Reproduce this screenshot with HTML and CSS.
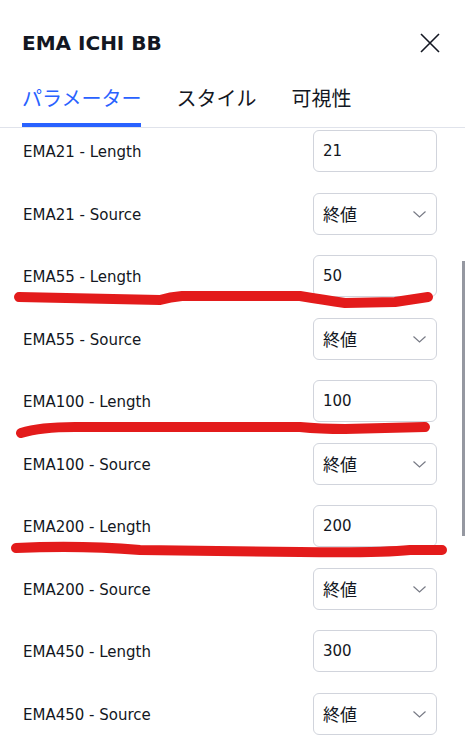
FILE: index.html
```html
<!DOCTYPE html>
<html lang="ja">
  <head>
    <meta charset="UTF-8" />
    <meta name="viewport" content="width=device-width, initial-scale=1.0" />
    <title>EMA ICHI BB</title>
    <link rel="stylesheet" href="styles.css">
  </head>
  <body>
    <div class="dialog">
      <div class="dialog-header">
        <h1 class="dialog-title">EMA ICHI BB</h1>
        <button type="button" class="close-btn" aria-label="閉じる">
          <svg width="20" height="20" viewBox="0 0 20 20">
            <path d="M1 1 L19 19 M19 1 L1 19" stroke="#131722" stroke-width="1.6" fill="none" />
          </svg>
        </button>
      </div>

      <div class="tabs">
        <span class="tab active">パラメーター</span>
        <span class="tab">スタイル</span>
        <span class="tab">可視性</span>
      </div>

      <div class="content">
        <div class="rows">
          <div class="row">
            <span class="row-label">EMA21 - Length</span>
            <div class="field">21</div>
          </div>
          <div class="row">
            <span class="row-label">EMA21 - Source</span>
            <div class="field select">終値<svg class="chevron" width="13" height="7" viewBox="0 0 13 7"><path d="M0.5 0.5 L6.5 6 L12.5 0.5" /></svg></div>
          </div>
          <div class="row">
            <span class="row-label">EMA55 - Length</span>
            <div class="field">50</div>
          </div>
          <div class="row">
            <span class="row-label">EMA55 - Source</span>
            <div class="field select">終値<svg class="chevron" width="13" height="7" viewBox="0 0 13 7"><path d="M0.5 0.5 L6.5 6 L12.5 0.5" /></svg></div>
          </div>
          <div class="row">
            <span class="row-label">EMA100 - Length</span>
            <div class="field">100</div>
          </div>
          <div class="row">
            <span class="row-label">EMA100 - Source</span>
            <div class="field select">終値<svg class="chevron" width="13" height="7" viewBox="0 0 13 7"><path d="M0.5 0.5 L6.5 6 L12.5 0.5" /></svg></div>
          </div>
          <div class="row">
            <span class="row-label">EMA200 - Length</span>
            <div class="field">200</div>
          </div>
          <div class="row">
            <span class="row-label">EMA200 - Source</span>
            <div class="field select">終値<svg class="chevron" width="13" height="7" viewBox="0 0 13 7"><path d="M0.5 0.5 L6.5 6 L12.5 0.5" /></svg></div>
          </div>
          <div class="row">
            <span class="row-label">EMA450 - Length</span>
            <div class="field">300</div>
          </div>
          <div class="row">
            <span class="row-label">EMA450 - Source</span>
            <div class="field select">終値<svg class="chevron" width="13" height="7" viewBox="0 0 13 7"><path d="M0.5 0.5 L6.5 6 L12.5 0.5" /></svg></div>
          </div>
        </div>
        <div class="scroll-thumb"></div>
      </div>

      <!-- annotations au feutre rouge -->
      <svg class="marks" width="465" height="747" viewBox="0 0 465 747">
        <g stroke="#e31b1b" stroke-width="10" stroke-linecap="round" stroke-linejoin="round" fill="none">
          <path d="M19 297 L160 300 Q170 297 182 296 L300 296 Q325 300 345 303 L395 302 Q415 299 428 297" />
          <path d="M21 433 Q40 427 75 427 L300 427 Q320 429 345 429 L425 427" />
          <path d="M16 548 Q80 545 140 550 L300 552 Q380 553 410 550 L442 550" />
        </g>
      </svg>
    </div>
  </body>
</html>
```

FILE: styles.css
```css
* {
  margin: 0;
  padding: 0;
  box-sizing: border-box;
}

body {
  font-family: "DejaVu Sans", "Noto Sans CJK JP", sans-serif;
  background-color: #ffffff;
  color: #131722;
  overflow: hidden;
}

.dialog {
  position: relative;
  width: 465px;
  height: 747px;
  overflow: hidden;
}

.dialog-header {
  display: flex;
  justify-content: space-between;
  align-items: center;
  padding: 28px 25px 0 22px;
  height: 58px;
}

.dialog-title {
  font-size: 20px;
  font-weight: 700;
  line-height: 28px;
}

.close-btn {
  border: none;
  background: none;
  width: 20px;
  height: 20px;
  display: flex;
}

.tabs {
  display: flex;
  gap: 35px;
  padding: 0 22px;
  border-bottom: 1px solid #e0e3eb;
}

.tab {
  font-family: "Noto Sans CJK JP", sans-serif;
  font-size: 20px;
  line-height: 28px;
  padding: 26px 0 11px;
  color: #131722;
  border-bottom: 4px solid transparent;
}

.tab.active {
  color: #2962ff;
  border-bottom-color: #2962ff;
}

.content {
  position: relative;
}

.rows {
  display: flex;
  flex-direction: column;
  gap: 20.5px;
  padding: 2px 28px 0 23px;
}

.row {
  display: flex;
  justify-content: space-between;
  align-items: center;
}

.row-label {
  font-size: 15px;
  padding-top: 2px;
}

.field {
  position: relative;
  width: 124px;
  height: 42px;
  border: 1px solid #d1d4dc;
  border-radius: 6px;
  padding: 0 9px;
  display: flex;
  align-items: center;
  font-size: 15px;
}

.field.select {
  font-family: "Noto Sans CJK JP", sans-serif;
  font-size: 17px;
}

.chevron {
  position: absolute;
  right: 10px;
  top: 17px;
  fill: none;
  stroke: #787b86;
  stroke-width: 1.2;
}

.scroll-thumb {
  position: absolute;
  right: 0;
  top: 133px;
  width: 3px;
  height: 275px;
  background-color: #9598a1;
}

.marks {
  position: absolute;
  top: 0;
  left: 0;
  pointer-events: none;
}
```
